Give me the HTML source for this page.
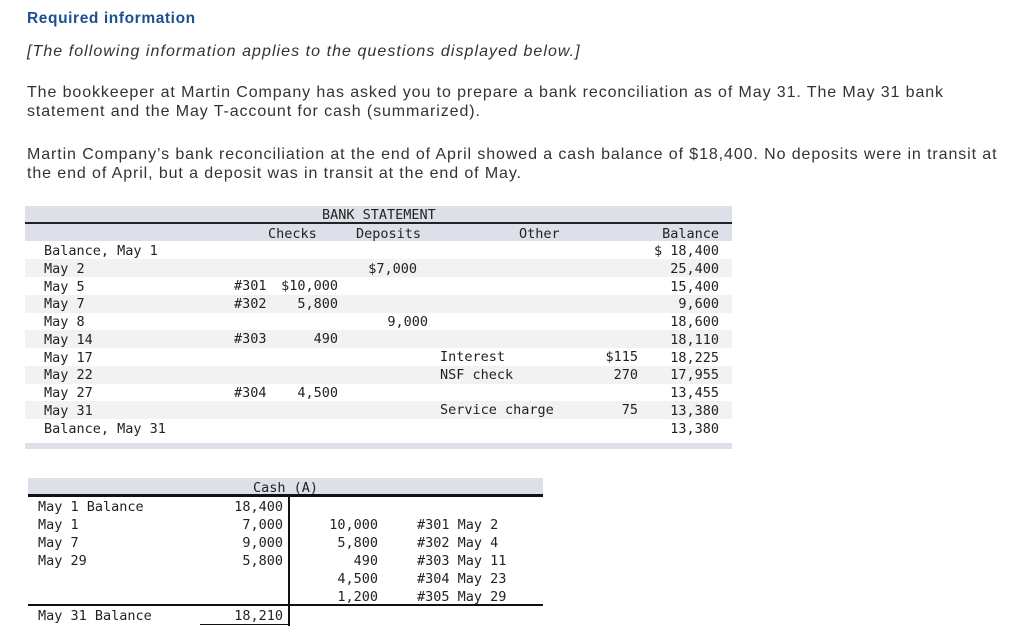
<!DOCTYPE html>
<html><head><meta charset="utf-8">
<style>
body{margin:0;width:1024px;height:641px;background:#fff;position:relative;overflow:hidden;font-family:"Liberation Sans",Arial,sans-serif;color:#333}
.a{position:absolute;white-space:nowrap}
.p{font-size:16px;letter-spacing:0.9px;line-height:19px}
.m{font-family:"DejaVu Sans Mono","Liberation Mono",monospace;font-size:13.5px;color:#222;position:absolute;white-space:nowrap;line-height:17px;margin-top:1px}
.r{text-align:right}
.bg{position:absolute;background:#dde0e8}
.alt{position:absolute;left:25px;width:707px;height:18px;background:#f2f2f2}
</style></head><body>
<div class="a" style="left:27px;top:10px;font-size:15.5px;font-weight:bold;color:#1d4f91;letter-spacing:0.6px">Required information</div>
<div class="a p" style="left:27px;top:42px;font-style:italic;letter-spacing:1.05px">[The following information applies to the questions displayed below.]</div>
<div class="a p" style="left:27px;top:83px">The bookkeeper at Martin Company has asked you to prepare a bank reconciliation as of May 31. The May 31 bank<br>statement and the May T-account for cash (summarized).</div>
<div class="a p" style="left:27px;top:145px">Martin Company’s bank reconciliation at the end of April showed a cash balance of $18,400. No deposits were in transit at<br>the end of April, but a deposit was in transit at the end of May.</div>

<div class="bg" style="left:25px;top:206px;width:707px;height:17px"></div>
<div style="position:absolute;left:25px;top:222px;width:707px;height:2px;background:#222"></div>
<div class="bg" style="left:25px;top:224px;width:707px;height:17px"></div>
<div class="bg" style="left:25px;top:443px;width:707px;height:6px"></div>
<div class="alt" style="top:259px"></div>
<div class="alt" style="top:295px"></div>
<div class="alt" style="top:330px"></div>
<div class="alt" style="top:366px"></div>
<div class="alt" style="top:401px"></div>
<div class="m" style="left:322px;top:206px">BANK STATEMENT</div>
<div class="m" style="left:268px;top:225px">Checks</div>
<div class="m" style="left:356px;top:225px">Deposits</div>
<div class="m" style="left:519px;top:225px">Other</div>
<div class="m r" style="right:305px;top:225px">Balance</div>

<div class="m" style="left:44px;top:242px;line-height:17.75px">Balance, May 1<br>May 2<br>May 5<br>May 7<br>May 8<br>May 14<br>May 17<br>May 22<br>May 27<br>May 31<br>Balance, May 31</div>
<div class="m r" style="right:305px;top:242px;line-height:17.75px">$ 18,400<br>25,400<br>15,400<br>9,600<br>18,600<br>18,110<br>18,225<br>17,955<br>13,455<br>13,380<br>13,380</div>
<div class="m" style="left:234px;top:277px;line-height:17.75px">#301<br>#302<br><br>#303<br><br><br>#304</div>
<div class="m r" style="right:686px;top:277px;line-height:17.75px">$10,000<br>5,800<br><br>490<br><br><br>4,500</div>
<div class="m r" style="right:607px;top:260px">$7,000</div>
<div class="m r" style="right:596px;top:313px">9,000</div>
<div class="m" style="left:440px;top:348px;line-height:17.75px">Interest<br>NSF check<br><br>Service charge</div>
<div class="m r" style="right:386px;top:348px;line-height:17.75px">$115<br>270<br><br>75</div>

<div class="bg" style="left:28px;top:478px;width:515px;height:17px"></div>
<div style="position:absolute;left:28px;top:494px;width:515px;height:3px;background:#111"></div>
<div style="position:absolute;left:288px;top:496px;width:2px;height:130px;background:#111"></div>
<div style="position:absolute;left:28px;top:604px;width:515px;height:2px;background:#111"></div>
<div style="position:absolute;left:200px;top:624px;width:89px;height:1px;background:#111"></div>
<div class="m" style="left:253px;top:479px">Cash (A)</div>
<div class="m" style="left:38px;top:498px;line-height:17.9px">May 1 Balance<br>May 1<br>May 7<br>May 29</div>
<div class="m r" style="right:741px;top:498px;line-height:17.9px">18,400<br>7,000<br>9,000<br>5,800</div>
<div class="m r" style="right:646px;top:516px;line-height:17.9px">10,000<br>5,800<br>490<br>4,500<br>1,200</div>
<div class="m" style="left:417px;top:516px;line-height:17.9px">#301 May 2<br>#302 May 4<br>#303 May 11<br>#304 May 23<br>#305 May 29</div>
<div class="m" style="left:38px;top:607px">May 31 Balance</div>
<div class="m r" style="right:741px;top:607px">18,210</div>
</body></html>
